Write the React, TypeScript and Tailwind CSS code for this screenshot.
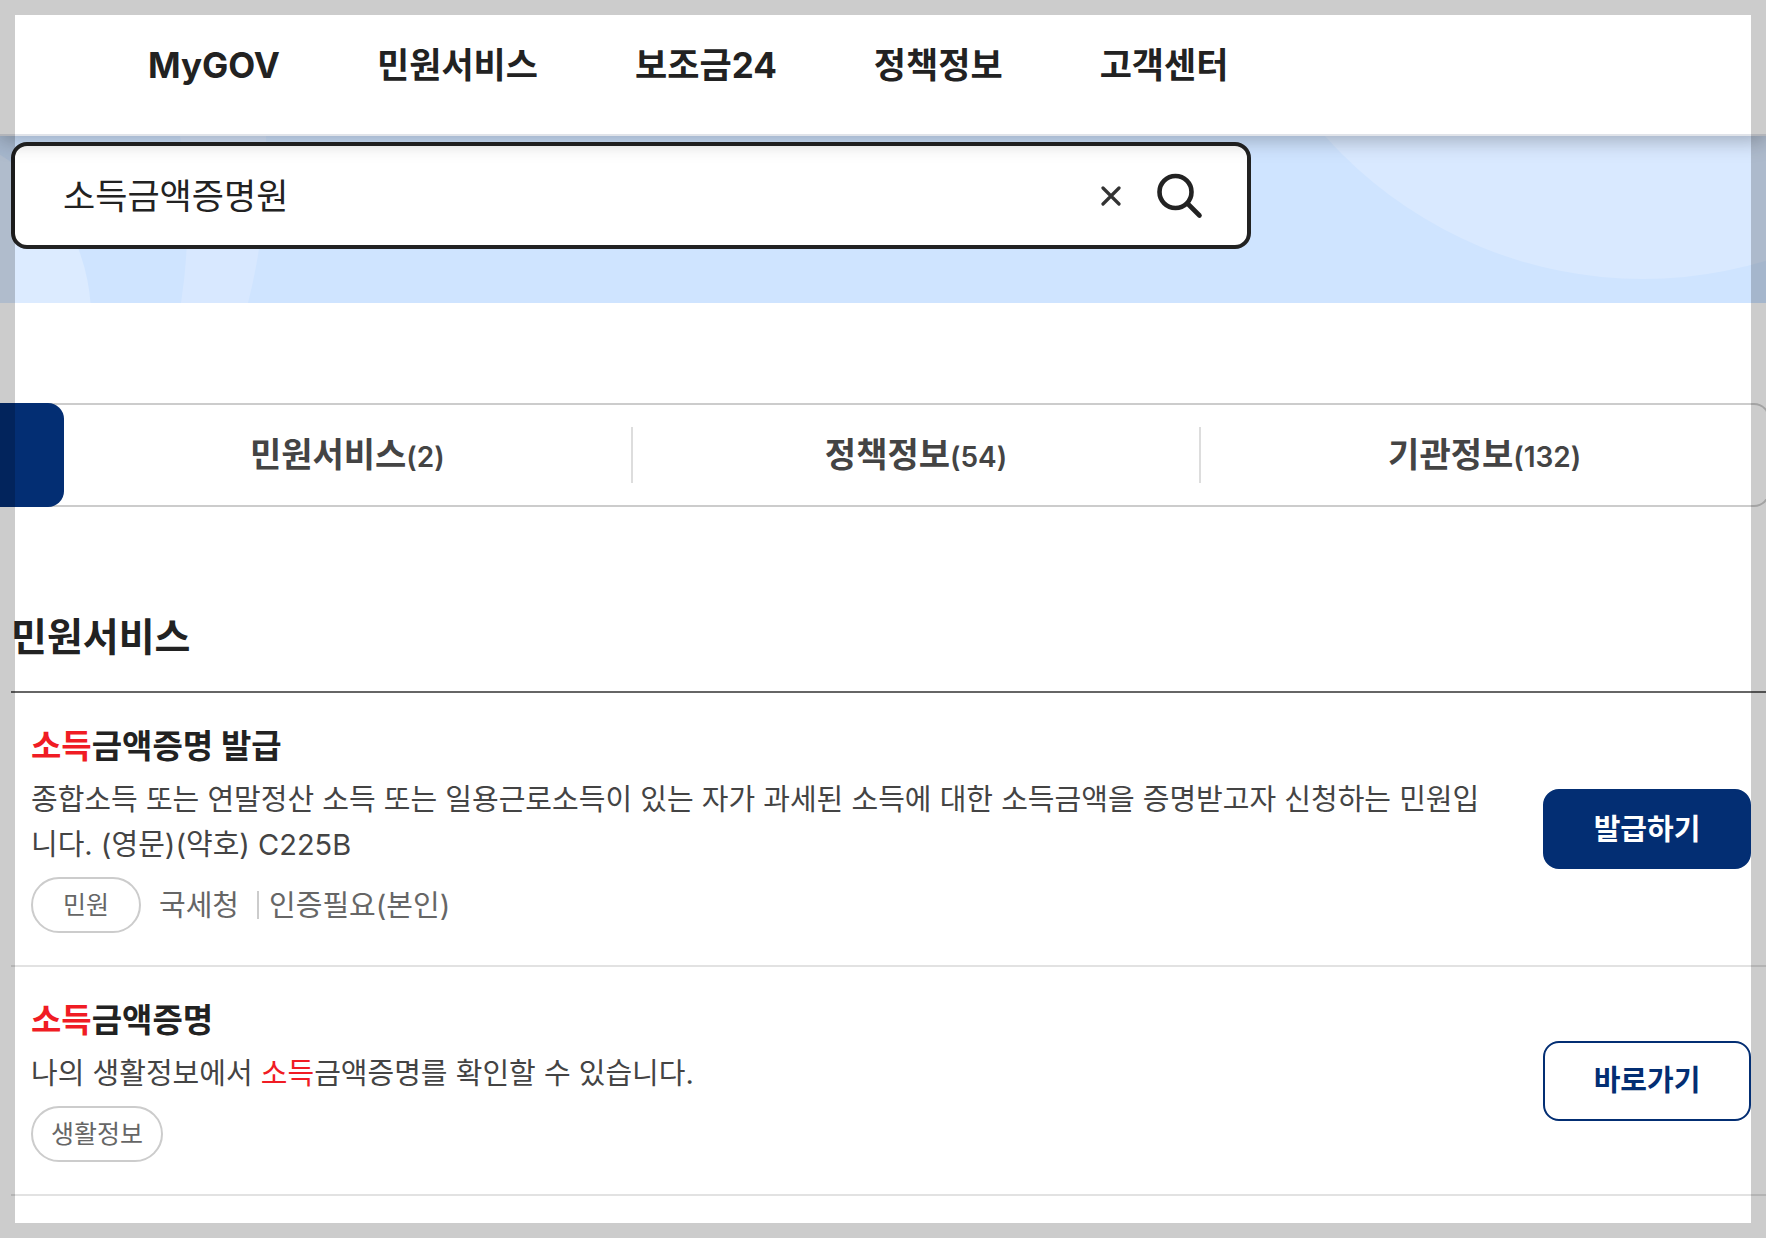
import { useState } from "react";

const NAV_ITEMS = ["MyGOV", "민원서비스", "보조금24", "정책정보", "고객센터"];

const TABS = [
  { label: "민원서비스", count: 2 },
  { label: "정책정보", count: 54 },
  { label: "기관정보", count: 132 },
];

type Part = { text: string; hit?: boolean };

type Service = {
  title: Part[];
  description: Part[];
  tag: string;
  meta: string[];
  action: string;
  primary: boolean;
};

const SERVICES: Service[] = [
  {
    title: [{ text: "소득", hit: true }, { text: "금액증명 발급" }],
    description: [
      {
        text: "종합소득 또는 연말정산 소득 또는 일용근로소득이 있는 자가 과세된 소득에 대한 소득금액을 증명받고자 신청하는 민원입니다. (영문)(약호) C225B",
      },
    ],
    tag: "민원",
    meta: ["국세청", "인증필요(본인)"],
    action: "발급하기",
    primary: true,
  },
  {
    title: [{ text: "소득", hit: true }, { text: "금액증명" }],
    description: [
      { text: "나의 생활정보에서 " },
      { text: "소득", hit: true },
      { text: "금액증명를 확인할 수 있습니다." },
    ],
    tag: "생활정보",
    meta: [],
    action: "바로가기",
    primary: false,
  },
];

function Highlighted({ parts }: { parts: Part[] }) {
  return (
    <>
      {parts.map((part, i) => (
        <span key={i} className={part.hit ? "text-[#f01c24]" : undefined}>
          {part.text}
        </span>
      ))}
    </>
  );
}

function Header() {
  return (
    <header className="relative z-10 border-b-2 border-[#e0e3e9] bg-white pt-10 pb-11 pl-37 shadow-[0_4px_20px_rgba(0,0,0,0.28)]">
      <nav className="flex gap-[97px] text-[35px] leading-[50px] font-bold">
        {NAV_ITEMS.map((item) => (
          <a key={item} href="#" className="whitespace-nowrap">
            {item}
          </a>
        ))}
      </nav>
    </header>
  );
}

function SearchHero() {
  const [query, setQuery] = useState("소득금액증명원");

  return (
    <section className="relative overflow-hidden bg-[#cfe4ff] pt-1.5 pb-[54px] pl-[11px]">
      <svg
        className="absolute inset-0 h-full w-full"
        viewBox="0 0 1766 167"
        preserveAspectRatio="xMidYMid slice"
        aria-hidden="true"
      >
        <circle cx="-99" cy="181" r="190" fill="#dcebff" />
        <path
          d="M180 0A519 519 0 0 1 181 167H248A606 606 0 0 0 266 0Z"
          fill="#d8e8ff"
        />
        <circle cx="1643" cy="-282" r="425" fill="#d9e9ff" />
      </svg>
      <form
        className="relative flex h-[107px] max-w-[1240px] items-center rounded-2xl border-4 border-[#222] bg-white pr-11 pl-12"
        onSubmit={(e) => e.preventDefault()}
      >
        <input
          type="text"
          aria-label="검색어"
          value={query}
          onChange={(e) => setQuery(e.target.value)}
          className="min-w-0 flex-1 text-[35px] leading-[50px] outline-none"
        />
        <button type="button" aria-label="지우기" onClick={() => setQuery("")}>
          <svg width="20" height="20" viewBox="0 0 20 20" fill="none">
            <path
              d="M2 2L18 18M18 2L2 18"
              stroke="#333"
              strokeWidth="3.2"
              strokeLinecap="round"
            />
          </svg>
        </button>
        <button type="submit" aria-label="검색" className="ml-9">
          <svg width="46" height="46" viewBox="0 0 46 46" fill="none">
            <circle cx="18.5" cy="19" r="16" stroke="#222" strokeWidth="4.6" />
            <path
              d="M30.5 30.5L42.5 42.5"
              stroke="#222"
              strokeWidth="4.6"
              strokeLinecap="round"
            />
          </svg>
        </button>
      </form>
    </section>
  );
}

function ResultTabs() {
  return (
    <div
      role="tablist"
      className="mt-25 -mr-1 flex h-[104px] rounded-r-2xl border-2 border-l-0 border-[#ccc]"
    >
      <button
        role="tab"
        aria-selected="true"
        aria-label="통합검색"
        className="-my-0.5 w-16 shrink-0 rounded-r-2xl bg-[#032e73]"
      />
      {TABS.map((tab, i) => (
        <button
          key={tab.label}
          role="tab"
          aria-selected="false"
          className={`my-[22px] flex flex-1 items-center justify-center pt-0.5 text-[34px] font-semibold text-[#444] ${
            i < TABS.length - 1 ? "border-r-2 border-[#ddd]" : ""
          }`}
        >
          <span className="leading-[50px]">
            {tab.label}
            <span className="text-[28px]">({tab.count})</span>
          </span>
        </button>
      ))}
    </div>
  );
}

function ServiceRow({ service }: { service: Service }) {
  return (
    <li className="flex items-center gap-14 border-b-2 border-[#e2e2e2] py-8 pr-[15px] pl-5">
      <div className="min-w-0 flex-1">
        <h3 className="text-[33px] leading-[42px] font-bold">
          <Highlighted parts={service.title} />
        </h3>
        <p className="mt-2.5 text-[29px] leading-[45px] break-all text-[#444]">
          <Highlighted parts={service.description} />
        </p>
        <div className="mt-2.5 flex items-center text-[29px] leading-[45px] text-[#666]">
          <span className="flex h-14 min-w-[110px] items-center justify-center rounded-full border-2 border-[#ccc] px-[18px] text-[25px]">
            {service.tag}
          </span>
          {service.meta.map((text, i) => (
            <span key={text} className="flex items-center">
              {i > 0 && <span className="mr-2.5 ml-[18px] h-7 w-0.5 bg-[#ccc]" />}
              <span className={i === 0 ? "ml-[18px]" : undefined}>{text}</span>
            </span>
          ))}
        </div>
      </div>
      <button
        className={`h-20 w-52 shrink-0 rounded-2xl border-2 border-[#032e73] text-[29px] leading-[45px] font-semibold ${
          service.primary ? "bg-[#032e73] text-white" : "bg-white text-[#032e73]"
        }`}
      >
        {service.action}
      </button>
    </li>
  );
}

export default function App() {
  return (
    <div className="relative min-h-screen overflow-hidden bg-white font-[Inter,'Noto_Sans_CJK_KR',sans-serif] text-[#222]">
      <Header />
      <SearchHero />
      <main>
        <ResultTabs />
        <section className="mt-25 pl-[11px]">
          <h2 className="border-b-2 border-[#666] pb-6 text-[39px] leading-[60px] font-bold">
            민원서비스
          </h2>
          <ul>
            {SERVICES.map((service) => (
              <ServiceRow key={service.action} service={service} />
            ))}
          </ul>
        </section>
      </main>
      {/* dimmed edge around the whole page */}
      <div className="pointer-events-none absolute inset-0 z-20 border-[15px] border-black/20" />
    </div>
  );
}
